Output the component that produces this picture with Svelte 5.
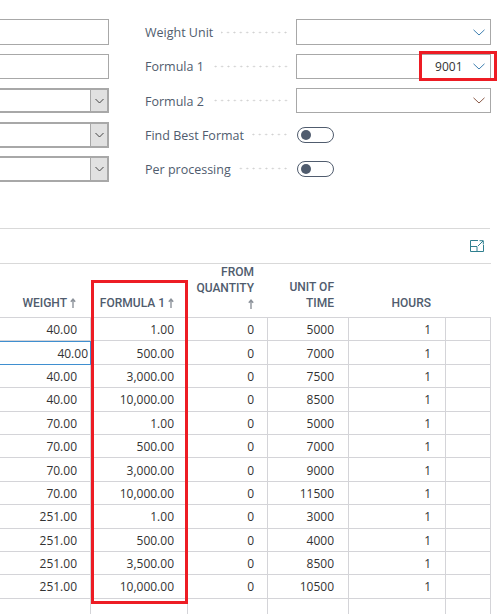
<script>
	const leftFields = [
		{ select: false },
		{ select: false },
		{ select: true },
		{ select: true },
		{ select: true }
	];

	const rightFields = [
		{ label: 'Weight Unit', type: 'lookup', value: '' },
		{ label: 'Formula 1', type: 'lookup', value: '9001' },
		{ label: 'Formula 2', type: 'lookup', value: '', warm: true },
		{ label: 'Find Best Format', type: 'toggle' },
		{ label: 'Per processing', type: 'toggle' }
	];

	const rows = [
		['40.00', '1.00', '0', '5000', '1'],
		['40.00', '500.00', '0', '7000', '1'],
		['40.00', '3,000.00', '0', '7500', '1'],
		['40.00', '10,000.00', '0', '8500', '1'],
		['70.00', '1.00', '0', '5000', '1'],
		['70.00', '500.00', '0', '7000', '1'],
		['70.00', '3,000.00', '0', '9000', '1'],
		['70.00', '10,000.00', '0', '11500', '1'],
		['251.00', '1.00', '0', '3000', '1'],
		['251.00', '500.00', '0', '4000', '1'],
		['251.00', '3,500.00', '0', '8500', '1'],
		['251.00', '10,000.00', '0', '10500', '1']
	];
</script>

{#snippet sortArrow()}
	<svg class="arrow" width="6" height="10" viewBox="0 0 6 10"><path d="M3 10V1.5M.8 3.8 3 1.2 5.2 3.8" fill="none" stroke="#8d939b" stroke-width="1.4" /></svg>
{/snippet}

<div class="page">
	<section class="form">
		<div class="col-left">
			{#each leftFields as field}
				<div class="row">
					<div class="input left" class:select={field.select}>
						{#if field.select}
							<span class="select-btn">
								<svg width="9" height="6" viewBox="0 0 9 6"><path d="M.5 1 4.5 5 8.5 1" fill="none" stroke="#444" /></svg>
							</span>
						{/if}
					</div>
				</div>
			{/each}
		</div>
		<div class="col-right">
			{#each rightFields as field}
				<div class="row">
					<span class="label">{field.label}</span>
					<span class="dots"></span>
					{#if field.type === 'lookup'}
						<div class="input lookup">
							<span class="value">{field.value}</span>
							<svg width="12" height="7" viewBox="0 0 12 7"><path d="M.5 .8 6 6 11.5 .8" fill="none" stroke={field.warm ? '#8a5a48' : '#3f7fb0'} /></svg>
						</div>
					{:else}
						<div class="toggle"><span class="knob"></span></div>
					{/if}
				</div>
			{/each}
		</div>
	</section>

	<div class="toolbar">
		<svg width="14" height="12" viewBox="0 0 14 12">
			<path d="M8 .5H.5V11.5H13.5V5M.5 6.5H7V11.5" fill="none" stroke="#2f7f8f" />
			<path d="M8 6 13 1M9.5 .7H13.3V4.5" fill="none" stroke="#2f7f8f" />
		</svg>
	</div>

	<div class="table">
		<div class="head c1">WEIGHT{@render sortArrow()}</div>
		<div class="head c2">FORMULA 1{@render sortArrow()}</div>
		<div class="head c3">FROM QUANTITY {@render sortArrow()}</div>
		<div class="head c4">UNIT OF TIME</div>
		<div class="head c5">HOURS</div>
		<div class="head c6"></div>

		{#each rows as row, i}
			{#each row as cell, j}
				<div class="cell c{j + 1}" class:active={i === 1 && j === 0}>{cell}</div>
			{/each}
			<div class="cell c6"></div>
		{/each}
		{#each [1, 2, 3, 4, 5, 6] as c}
			<div class="cell tail c{c}"></div>
		{/each}
	</div>

	<div class="mark mark-value"></div>
	<div class="mark mark-column"></div>
</div>

<style>
	:global(body) {
		margin: 0;
		background: #fff;
	}

	.page {
		position: relative;
		width: 500px;
		height: 614px;
		overflow: hidden;
		font-family: 'Open Sans', 'Noto Sans', sans-serif;
		font-size: 12px;
		color: #333;
	}

	.form {
		display: flex;
		gap: 36px;
		padding-top: 19.4px;
		height: 229px;
		box-sizing: border-box;
		border-bottom: 1px solid #d9d9d9;
		width: 490px;
	}

	.col-left {
		width: 109px;
		flex: none;
	}

	.col-right {
		width: 345.5px;
		flex: none;
	}

	.row {
		display: flex;
		align-items: center;
		height: 25.6px;
		margin-bottom: 8.6px;
	}

	.label {
		color: #505c6e;
		font-size: 12.5px;
		white-space: nowrap;
		padding-top: 1px;
	}

	.dots {
		flex: 1;
		height: 3px;
		margin: 0 7px 0 8px;
		background-image: radial-gradient(circle, #d0d0d0 0.8px, transparent 1.1px);
		background-size: 6.4px 3px;
		background-position: right center;
	}

	.input {
		box-sizing: border-box;
		height: 100%;
		border: 1px solid #a8a8a8;
		background: #fff;
		display: flex;
		align-items: center;
		justify-content: flex-end;
	}

	.input.left {
		width: 109px;
		border-left: 0;
	}

	.input.select {
		border-width: 2px 2px 2px 0;
	}

	.select-btn {
		box-sizing: border-box;
		width: 17px;
		height: 100%;
		background: #e1e1e1;
		border-left: 1px solid #a8a8a8;
		display: flex;
		align-items: center;
		justify-content: center;
	}

	.lookup {
		width: 194.5px;
		flex: none;
		padding-right: 5px;
		gap: 10px;
	}

	.value {
		font-size: 12px;
		color: #333;
		padding-top: 1px;
	}

	.toggle {
		box-sizing: border-box;
		width: 37px;
		height: 16px;
		margin-left: 1px;
		margin-right: 157px;
		border: 1px solid #505c6e;
		border-radius: 8px;
		padding: 2px 0 0 3px;
	}

	.knob {
		display: block;
		width: 10px;
		height: 10px;
		border-radius: 50%;
		background: #505c6e;
	}

	.toolbar {
		width: 484px;
		height: 34px;
		box-sizing: border-box;
		display: flex;
		align-items: center;
		justify-content: flex-end;
	}

	.table {
		display: grid;
		grid-template-columns: 91px 97px 80px 81px 97px 45px;
		grid-template-rows: 54px repeat(12, 23.4px) 16px;
		width: 491px;
		border-top: 1px solid #d9d9d9;
	}

	.head {
		box-sizing: border-box;
		align-self: stretch;
		display: flex;
		flex-direction: column;
		justify-content: flex-end;
		text-align: right;
		padding-bottom: 6px;
		border-bottom: 1px solid #d4d4d8;
		font-family: Roboto, 'Liberation Sans', sans-serif;
		font-weight: 500;
		font-size: 12px;
		line-height: 16px;
		color: #505c6e;
	}

	.head.c1,
	.head.c2 {
		display: block;
		padding-top: 31px;
	}

	.head.c3 {
		display: block;
		padding-top: 0;
	}

	.head.c1 { padding-right: 15px; }
	.head.c2 { padding-right: 14px; }
	.head.c3 { padding-right: 14px; }
	.head.c4 { padding-right: 15px; }
	.head.c5 { padding-right: 15px; }

	.arrow {
		margin-left: 3px;
		vertical-align: -1px;
	}

	.cell {
		box-sizing: border-box;
		display: flex;
		align-items: center;
		justify-content: flex-end;
		padding-top: 1px;
		border-bottom: 1px solid #d4d4d8;
		border-right: 1px solid #d4d4d8;
		font-size: 12px;
		color: #333;
	}

	.tail {
		border-bottom: 0;
	}

	.c1 { padding-right: 13px; }
	.c2 { padding-right: 13px; }
	.c3 { padding-right: 13px; }
	.c4 { padding-right: 14px; }
	.c5 { padding-right: 14px; }

	.cell.active {
		border: 1px solid #3f8fd0;
		border-left: 0;
		padding-right: 2px;
	}

	.mark {
		position: absolute;
		box-sizing: border-box;
		border: 3px solid #ed1c24;
	}

	.mark-value {
		left: 419px;
		top: 51px;
		width: 78px;
		height: 30px;
	}

	.mark-column {
		left: 91px;
		top: 280px;
		width: 97px;
		height: 324px;
	}
</style>
